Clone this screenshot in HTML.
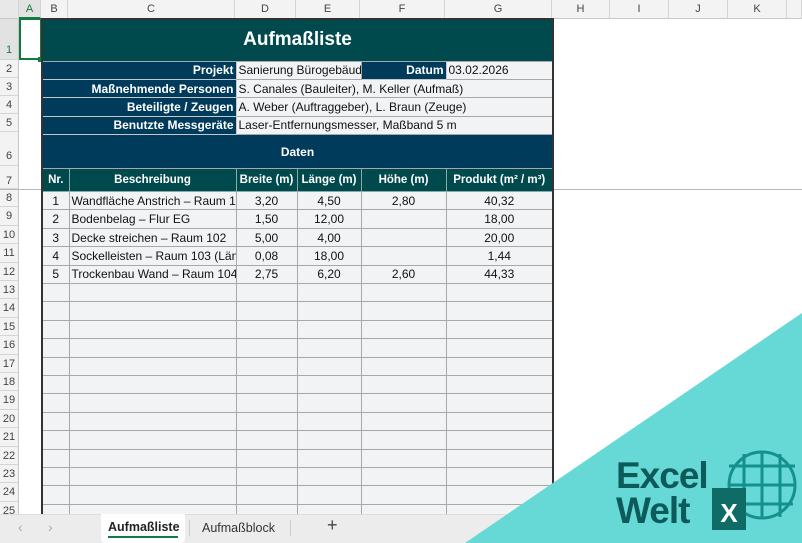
<!DOCTYPE html>
<html><head><meta charset="utf-8"><style>
*{box-sizing:border-box;margin:0;padding:0}
body{width:802px;height:543px;overflow:hidden;background:#fff;font-family:"Liberation Sans",sans-serif;position:relative}
.ch{position:absolute;top:0;height:19px;background:#f3f3f3;border-right:1px solid #d4d4d4;border-bottom:1px solid #c8c8c8;font-size:11px;color:#444;text-align:center;line-height:19px}
.rh{position:absolute;left:0;width:19px;background:#f3f3f3;border-bottom:1px solid #d4d4d4;border-right:1px solid #c8c8c8;font-size:11px;color:#444;text-align:center}
table{position:absolute;left:41px;top:18px;width:511px;border-collapse:collapse;table-layout:fixed;font-size:12px;border:2px solid #333}
td{border:1px solid #a8a8a8;white-space:nowrap;overflow:hidden;padding:0 2px;height:18.4px;background:#f2f3f5;color:#111}
.t{background:#004a4d;color:#fff;font-weight:bold;font-size:19px;text-align:center;height:42px}
.l{background:#003b5c;color:#fff;font-weight:bold;text-align:right;border-color:#c8c8c8}
.d{background:#003b5c;color:#fff;font-weight:bold;text-align:center;height:34px}
.h td{background:#004a4d;color:#fff;font-weight:bold;text-align:center;height:23px;border-color:#8aa;font-size:11.5px;padding:0}
.c{text-align:center}
.v{background:#f2f3f5}
</style></head><body>
<div class="ch" style="left:0;width:19px;background:#e8e8e8"></div>
<div class="ch" style="left:19px;width:22px;color:#107c41;border-bottom:2px solid #107c41;background:#e2e2e2">A</div>
<div class="ch" style="left:41px;width:27px">B</div>
<div class="ch" style="left:68px;width:167px">C</div>
<div class="ch" style="left:235px;width:61px">D</div>
<div class="ch" style="left:296px;width:64px">E</div>
<div class="ch" style="left:360px;width:85px">F</div>
<div class="ch" style="left:445px;width:107px">G</div>
<div class="ch" style="left:552px;width:58px">H</div>
<div class="ch" style="left:610px;width:59px">I</div>
<div class="ch" style="left:669px;width:59px">J</div>
<div class="ch" style="left:728px;width:59px">K</div>
<div class="ch" style="left:787px;width:15px"></div>

<div class="rh" style="top:19px;height:41px;line-height:62px;color:#107c41;background:#e2e2e2">1</div>
<div class="rh" style="top:60px;height:18px;line-height:19px">2</div>
<div class="rh" style="top:78px;height:18px;line-height:19px">3</div>
<div class="rh" style="top:96px;height:18px;line-height:19px">4</div>
<div class="rh" style="top:114px;height:18px;line-height:19px">5</div>
<div class="rh" style="top:132px;height:34px;line-height:48px">6</div>
<div class="rh" style="top:166px;height:23px;line-height:30px">7</div>
<div class="rh" style="top:189px;height:18.4px;line-height:19px">8</div>
<div class="rh" style="top:207.4px;height:18.4px;line-height:19px">9</div>
<div class="rh" style="top:225.8px;height:18.4px;line-height:19px">10</div>
<div class="rh" style="top:244.2px;height:18.4px;line-height:19px">11</div>
<div class="rh" style="top:262.6px;height:18.4px;line-height:19px">12</div>
<div class="rh" style="top:281px;height:18.4px;line-height:19px">13</div>
<div class="rh" style="top:299.4px;height:18.4px;line-height:19px">14</div>
<div class="rh" style="top:317.8px;height:18.4px;line-height:19px">15</div>
<div class="rh" style="top:336.2px;height:18.4px;line-height:19px">16</div>
<div class="rh" style="top:354.6px;height:18.4px;line-height:19px">17</div>
<div class="rh" style="top:373px;height:18.4px;line-height:19px">18</div>
<div class="rh" style="top:391.4px;height:18.4px;line-height:19px">19</div>
<div class="rh" style="top:409.8px;height:18.4px;line-height:19px">20</div>
<div class="rh" style="top:428.2px;height:18.4px;line-height:19px">21</div>
<div class="rh" style="top:446.6px;height:18.4px;line-height:19px">22</div>
<div class="rh" style="top:465px;height:18.4px;line-height:19px">23</div>
<div class="rh" style="top:483.4px;height:18.4px;line-height:19px">24</div>
<div class="rh" style="top:501.8px;height:18.4px;line-height:19px">25</div>

<div style="position:absolute;left:0;top:189px;width:802px;height:1px;background:#b8b8b8"></div>
<div style="position:absolute;left:19px;top:18px;width:23px;height:42px;border:2px solid #107c41"></div>
<div style="position:absolute;left:38px;top:57px;width:5px;height:5px;background:#107c41"></div>

<table>
<colgroup><col style="width:27px"><col style="width:167px"><col style="width:61px"><col style="width:64px"><col style="width:85px"><col style="width:107px"></colgroup>
<tr><td colspan="6" class="t">Aufmaßliste</td></tr>
<tr><td colspan="2" class="l">Projekt</td><td colspan="2" class="v">Sanierung Bürogebäude</td><td class="l">Datum</td><td class="v">03.02.2026</td></tr>
<tr><td colspan="2" class="l">Maßnehmende Personen</td><td colspan="4" class="v">S. Canales (Bauleiter), M. Keller (Aufmaß)</td></tr>
<tr><td colspan="2" class="l">Beteiligte / Zeugen</td><td colspan="4" class="v">A. Weber (Auftraggeber), L. Braun (Zeuge)</td></tr>
<tr><td colspan="2" class="l">Benutzte Messgeräte</td><td colspan="4" class="v">Laser-Entfernungsmesser, Maßband 5 m</td></tr>
<tr><td colspan="6" class="d">Daten</td></tr>
<tr class="h"><td>Nr.</td><td>Beschreibung</td><td>Breite (m)</td><td>Länge (m)</td><td>Höhe (m)</td><td>Produkt (m² / m³)</td></tr>
<tr><td class="c">1</td><td>Wandfläche Anstrich – Raum 101</td><td class="c">3,20</td><td class="c">4,50</td><td class="c">2,80</td><td class="c">40,32</td></tr>
<tr><td class="c">2</td><td>Bodenbelag – Flur EG</td><td class="c">1,50</td><td class="c">12,00</td><td></td><td class="c">18,00</td></tr>
<tr><td class="c">3</td><td>Decke streichen – Raum 102</td><td class="c">5,00</td><td class="c">4,00</td><td></td><td class="c">20,00</td></tr>
<tr><td class="c">4</td><td>Sockelleisten – Raum 103 (Länge)</td><td class="c">0,08</td><td class="c">18,00</td><td></td><td class="c">1,44</td></tr>
<tr><td class="c">5</td><td>Trockenbau Wand – Raum 104</td><td class="c">2,75</td><td class="c">6,20</td><td class="c">2,60</td><td class="c">44,33</td></tr>
<tr><td></td><td></td><td></td><td></td><td></td><td></td></tr>
<tr><td></td><td></td><td></td><td></td><td></td><td></td></tr>
<tr><td></td><td></td><td></td><td></td><td></td><td></td></tr>
<tr><td></td><td></td><td></td><td></td><td></td><td></td></tr>
<tr><td></td><td></td><td></td><td></td><td></td><td></td></tr>
<tr><td></td><td></td><td></td><td></td><td></td><td></td></tr>
<tr><td></td><td></td><td></td><td></td><td></td><td></td></tr>
<tr><td></td><td></td><td></td><td></td><td></td><td></td></tr>
<tr><td></td><td></td><td></td><td></td><td></td><td></td></tr>
<tr><td></td><td></td><td></td><td></td><td></td><td></td></tr>
<tr><td></td><td></td><td></td><td></td><td></td><td></td></tr>
<tr><td></td><td></td><td></td><td></td><td></td><td></td></tr>
<tr><td></td><td></td><td></td><td></td><td></td><td></td></tr>
</table>

<div style="position:absolute;left:0;top:514px;width:802px;height:29px;background:#ececec;border-top:1px solid #ddd"></div>
<div style="position:absolute;left:18px;top:519px;font-size:14px;color:#aaa">&lsaquo;</div>
<div style="position:absolute;left:48px;top:519px;font-size:14px;color:#aaa">&rsaquo;</div>
<div style="position:absolute;left:101px;top:514px;width:84px;height:29px;background:#fff;border-radius:0 0 4px 4px"></div>
<div style="position:absolute;left:108px;top:520px;font-size:12.5px;font-weight:bold;color:#222">Aufmaßliste</div>
<div style="position:absolute;left:108px;top:536px;width:70px;height:2px;background:#107c41"></div>
<div style="position:absolute;left:189px;top:520px;width:1px;height:16px;background:#ccc"></div>
<div style="position:absolute;left:202px;top:521px;font-size:12.5px;color:#333">Aufmaßblock</div>
<div style="position:absolute;left:290px;top:520px;width:1px;height:16px;background:#ccc"></div>
<div style="position:absolute;left:327px;top:515px;font-size:18px;color:#444">+</div>

<svg style="position:absolute;left:0;top:0" width="802" height="543">
<polygon points="465,543 802,313 802,543" fill="#66d9d6"/>
<g fill="none" stroke="#14908f" stroke-width="3">
<circle cx="762" cy="485" r="33"/>
<line x1="729" y1="466" x2="795" y2="466"/><line x1="729" y1="485" x2="795" y2="485"/><line x1="731" y1="504" x2="793" y2="504"/>
<line x1="744" y1="454" x2="744" y2="517"/><line x1="762" y1="452" x2="762" y2="518"/><line x1="780" y1="454" x2="780" y2="517"/>
</g>
<rect x="712" y="488" width="34" height="42" fill="#0f6b66"/>
<text x="729" y="522" text-anchor="middle" font-family="Liberation Sans" font-weight="bold" font-size="26" fill="#fff">X</text>
<text x="616" y="488" font-family="Liberation Sans" font-weight="bold" font-size="37" fill="#0d5a5a" letter-spacing="-1">Excel</text>
<text x="616" y="523" font-family="Liberation Sans" font-weight="bold" font-size="37" fill="#0d5a5a" letter-spacing="-1">Welt</text>
</svg>
</body></html>
